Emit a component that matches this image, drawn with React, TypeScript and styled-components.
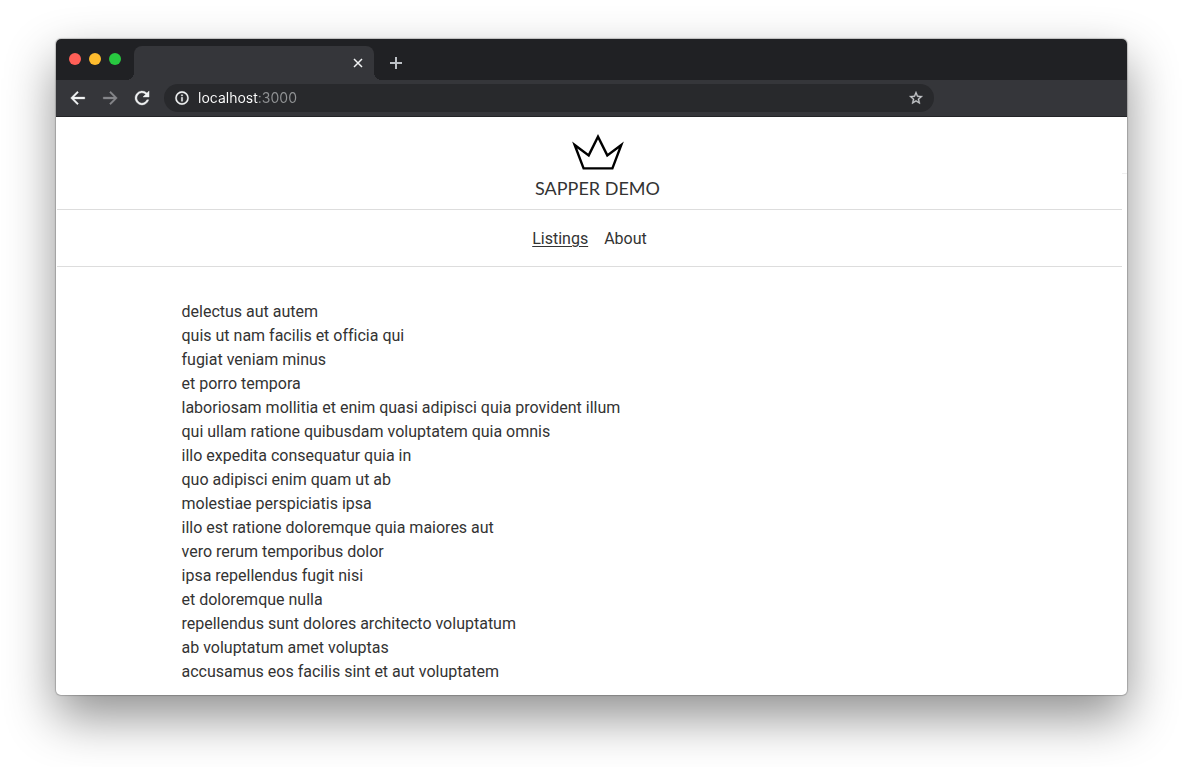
import React from "react";
import styled, { createGlobalStyle } from "styled-components";

const GlobalStyle = createGlobalStyle`
  *, *::before, *::after { box-sizing: border-box; }
  body {
    margin: 0;
    background: #fff;
    font-family: Roboto, "Liberation Sans", sans-serif;
    font-size: 16px;
    line-height: 24px;
    font-variant-ligatures: none;
    color: #333;
  }
`;

const Desktop = styled.div`
  padding: 39px 56px 72px;
  overflow: hidden;
`;

const BrowserWindow = styled.div`
  border-radius: 5px;
  background: #fff;
  box-shadow: 0 0 1px 1px rgba(0, 0, 0, 0.2), 0 22px 50px rgba(0, 0, 0, 0.44);
`;

const TabStrip = styled.div`
  display: flex;
  height: 41px;
  padding-left: 13px;
  border-radius: 5px 5px 0 0;
  background: #202124;
`;

const WindowControls = styled.div`
  display: flex;
  gap: 8px;
  height: 40px;
  align-items: center;
  padding-right: 12px;
`;

const WindowButton = styled.button<{ $color: string }>`
  width: 12px;
  height: 12px;
  padding: 0;
  border: 0;
  border-radius: 50%;
  background: ${(p) => p.$color};
`;

const Tab = styled.div`
  position: relative;
  display: flex;
  align-items: center;
  justify-content: flex-end;
  width: 240px;
  height: 34px;
  margin: 7px 10px 0 1px;
  padding-right: 8px;
  border-radius: 8px 8px 0 0;
  background: #35363a;

  &::before,
  &::after {
    content: "";
    position: absolute;
    bottom: 0;
    width: 8px;
    height: 8px;
  }
  &::before {
    left: -8px;
    background: radial-gradient(circle at 0 0, transparent 8px, #35363a 8px);
  }
  &::after {
    right: -8px;
    background: radial-gradient(circle at 100% 0, transparent 8px, #35363a 8px);
  }
`;

const IconButton = styled.button<{ $color?: string }>`
  display: flex;
  align-items: center;
  justify-content: center;
  width: 16px;
  height: 16px;
  padding: 0;
  border: 0;
  background: none;
  color: ${(p) => p.$color ?? "#f1f3f4"};

  svg { display: block; flex: none; }
`;

const NewTab = styled(IconButton)`
  width: 24px;
  height: 24px;
  margin-top: 12px;
`;

const Toolbar = styled.div`
  display: flex;
  align-items: center;
  gap: 16px;
  height: 37px;
  padding: 0 193px 0 14px;
  border-bottom: 1px solid #232427;
  background: #35363a;
`;

const AddressBar = styled.form`
  display: flex;
  flex: 1;
  align-items: center;
  gap: 8px;
  height: 28px;
  margin-left: -2px;
  padding: 0 10px;
  border-radius: 14px;
  background: #28292c;
`;

const AddressInput = styled.input`
  flex: 1;
  min-width: 0;
  height: 20px;
  padding: 0;
  border: 0;
  outline: 0;
  font: 14px/20px Inter, "Liberation Sans", sans-serif;
  color: transparent;
  background: linear-gradient(90deg, #fff 61px, #919395 61px);
  background-clip: text;
  -webkit-background-clip: text;
`;

const Viewport = styled.div`
  display: flex;
  padding-left: 1px;
`;

const Page = styled.div`
  flex: 1;
  min-width: 0;
`;

const Gutter = styled.div`
  width: 5px;
  height: 57px;
  border-bottom: 1px solid #f0f0f0;
`;

const Header = styled.header`
  display: flex;
  flex-direction: column;
  align-items: center;
  height: 93px;
  padding: 16px 0 0 16px;
  border-bottom: 1px solid #ddd;
`;

const Title = styled.h1`
  margin: 5px 0 0;
  font: 18px/24px Lato, "Liberation Sans", sans-serif;
`;

const Nav = styled.nav`
  display: flex;
  justify-content: center;
  gap: 16px;
  padding: 17px 0 15px;
  border-bottom: 1px solid #ddd;
`;

const NavLink = styled.a<{ $active?: boolean }>`
  color: inherit;
  text-decoration: ${(p) => (p.$active ? "underline" : "none")};
  text-decoration-thickness: 1px;
  text-underline-offset: 2px;
`;

const Listings = styled.ul`
  max-width: 816px;
  margin: 0 auto;
  padding: 33px 0 11px;
  list-style: none;
`;

const items = [
  "delectus aut autem",
  "quis ut nam facilis et officia qui",
  "fugiat veniam minus",
  "et porro tempora",
  "laboriosam mollitia et enim quasi adipisci quia provident illum",
  "qui ullam ratione quibusdam voluptatem quia omnis",
  "illo expedita consequatur quia in",
  "quo adipisci enim quam ut ab",
  "molestiae perspiciatis ipsa",
  "illo est ratione doloremque quia maiores aut",
  "vero rerum temporibus dolor",
  "ipsa repellendus fugit nisi",
  "et doloremque nulla",
  "repellendus sunt dolores architecto voluptatum",
  "ab voluptatum amet voluptas",
  "accusamus eos facilis sint et aut voluptatem",
];

function Glyph({ d, size = 18 }: { d: string; size?: number }) {
  return (
    <svg
      width={size}
      height={size}
      viewBox="0 0 24 24"
      fill="currentColor"
      stroke="currentColor"
      strokeWidth="0.5"
      aria-hidden="true"
    >
      <path d={d} />
    </svg>
  );
}

const ARROW_LEFT = "M21 10.8H6.6l6-6.1L11.1 3.1 2.2 12l8.9 8.9 1.5-1.6-6-6.1H21z";
const ARROW_RIGHT = "M3 10.8h14.4l-6-6.1L12.9 3.1 21.8 12l-8.9 8.9-1.5-1.6 6-6.1H3z";
const RELOAD =
  "M18.6 5.4A9.3 9.3 0 1 0 21 14.4h-2.5A6.9 6.9 0 1 1 16.9 7.1L13.3 10.7H21.4V2.6z";
const INFO =
  "M11 7h2v2h-2zm0 4h2v6h-2zm1-9a10 10 0 1 0 0 20 10 10 0 0 0 0-20zm0 18a8 8 0 1 1 0-16 8 8 0 0 1 0 16z";
const STAR =
  "M22 9.24l-7.19-.62L12 2 9.19 8.63 2 9.24l5.46 4.73L5.82 21 12 17.27 18.18 21l-1.63-7.03L22 9.24zM12 15.4l-3.76 2.27 1-4.28-3.32-2.88 4.38-.38L12 6.1l1.71 4.04 4.38.38-3.32 2.88 1 4.28L12 15.4z";

export default function App() {
  return (
    <>
      <GlobalStyle />
      <Desktop>
        <BrowserWindow>
          <TabStrip>
            <WindowControls>
              <WindowButton $color="#ff5f57" aria-label="Close window" />
              <WindowButton $color="#febc2e" aria-label="Minimize window" />
              <WindowButton $color="#28c840" aria-label="Zoom window" />
            </WindowControls>
            <Tab>
              <IconButton aria-label="Close tab">
                <svg width="10" height="10" viewBox="0 0 10 10" stroke="currentColor" strokeWidth="1.5">
                  <path d="M1 1l8 8M9 1l-8 8" />
                </svg>
              </IconButton>
            </Tab>
            <NewTab $color="#bdc1c6" aria-label="New tab">
              <svg width="12" height="12" viewBox="0 0 12 12" stroke="currentColor" strokeWidth="2">
                <path d="M6 0v12M0 6h12" />
              </svg>
            </NewTab>
          </TabStrip>
          <Toolbar>
            <IconButton aria-label="Back"><Glyph d={ARROW_LEFT} /></IconButton>
            <IconButton $color="#85868a" aria-label="Forward"><Glyph d={ARROW_RIGHT} /></IconButton>
            <IconButton aria-label="Reload"><Glyph d={RELOAD} /></IconButton>
            <AddressBar>
              <IconButton type="button" aria-label="Site information"><Glyph d={INFO} size={16} /></IconButton>
              <AddressInput aria-label="Address" defaultValue="localhost:3000" />
              <IconButton type="button" $color="#c8cacd" aria-label="Bookmark this page">
                <Glyph d={STAR} size={16} />
              </IconButton>
            </AddressBar>
          </Toolbar>
          <Viewport>
            <Page>
              <Header>
                <svg width="52" height="38" viewBox="0 0 52 38" fill="none" stroke="#000" strokeWidth="2.4" aria-hidden="true">
                  <path d="M2.7 12L11.6 35.4H40.4L49.3 12L35.3 22.4L26 3.6L16.7 22.4Z" />
                </svg>
                <Title>SAPPER DEMO</Title>
              </Header>
              <Nav>
                <NavLink href="#listings" $active>Listings</NavLink>
                <NavLink href="#about">About</NavLink>
              </Nav>
              <Listings>
                {items.map((item) => (
                  <li key={item}>{item}</li>
                ))}
              </Listings>
            </Page>
            <Gutter />
          </Viewport>
        </BrowserWindow>
      </Desktop>
    </>
  );
}
